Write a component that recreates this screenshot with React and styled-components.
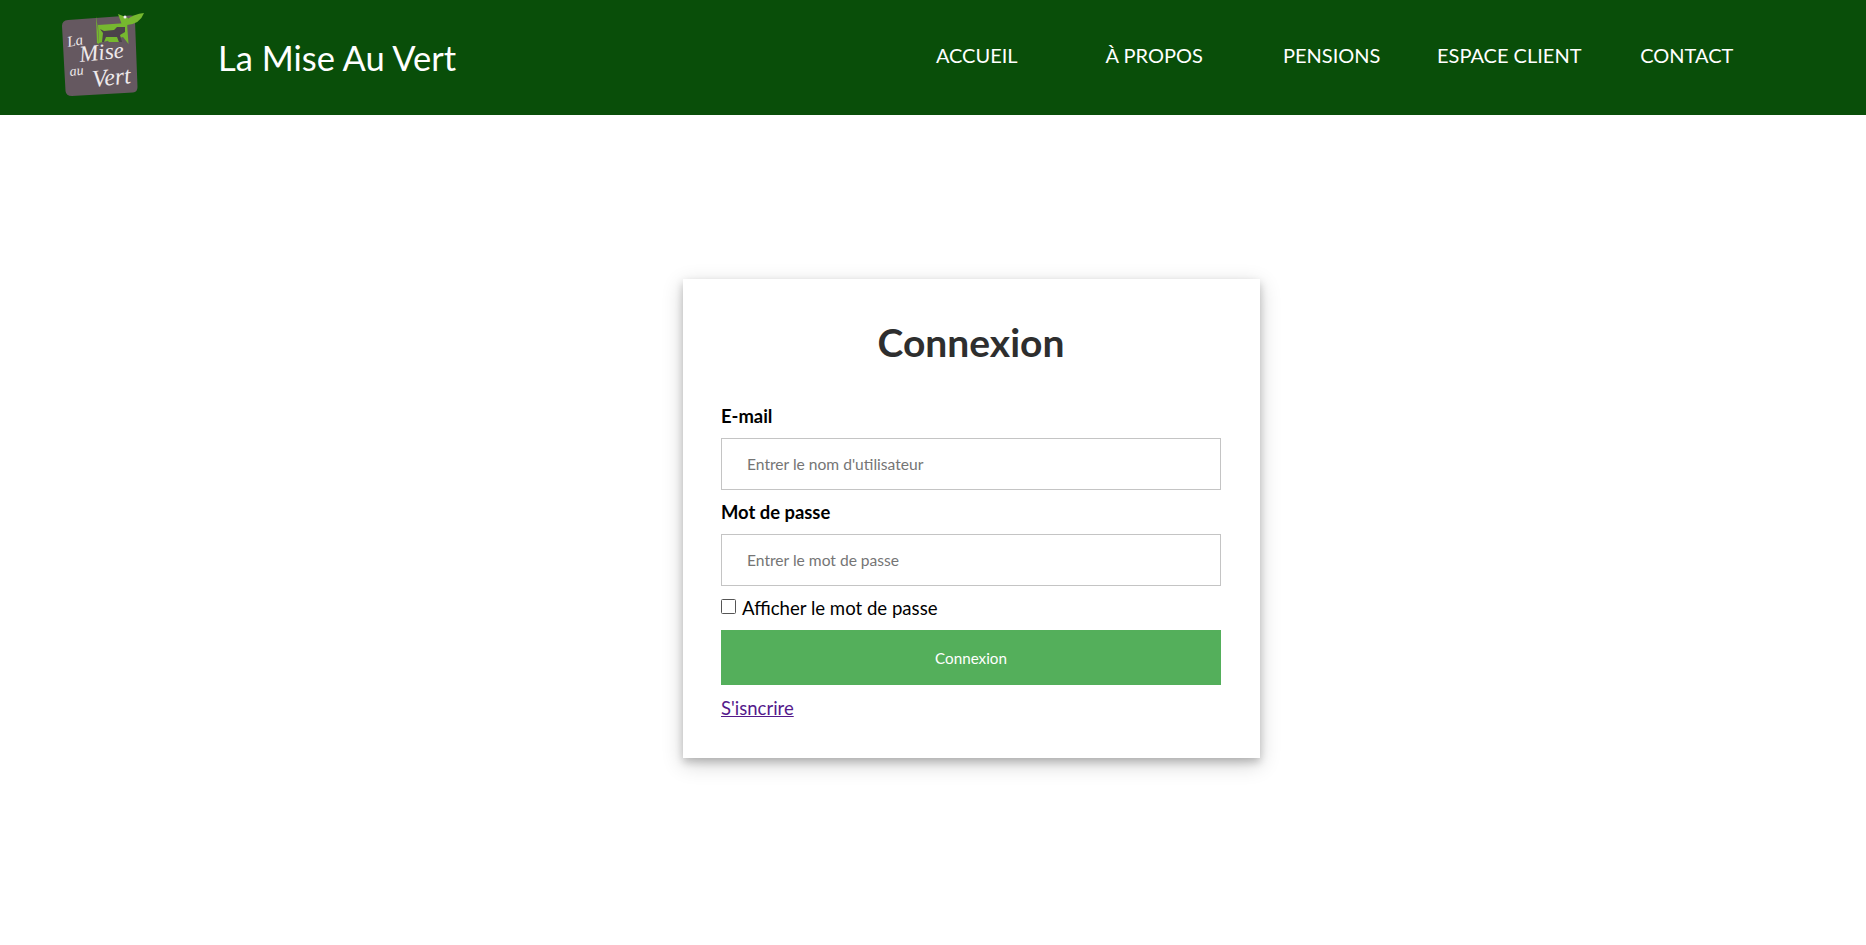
import styled, { createGlobalStyle } from "styled-components";

const GlobalStyle = createGlobalStyle`
  html, body {
    margin: 0;
    padding: 0;
    background: #fff;
    font-family: Lato, "Liberation Sans", sans-serif;
  }
`;

const Header = styled.header`
  display: flex;
  align-items: center;
  height: 115px;
  padding-left: 55px;
  background: #094e09;
  box-sizing: border-box;
`;

const LogoSvg = styled.svg`
  display: block;
  width: 100px;
  height: 100px;
  flex: none;
`;

const SiteTitle = styled.div`
  margin: 0 0 0 63px;
  width: 670px;
  flex: none;
  color: #fff;
  font-size: 34.5px;
  white-space: nowrap;
`;

const Nav = styled.nav`
  display: grid;
  grid-template-columns: repeat(5, 177.5px);
  margin-top: -5px;
`;

const NavLink = styled.a`
  color: #fff;
  font-size: 20px;
  text-align: center;
  white-space: nowrap;
  text-decoration: none;
`;

const Main = styled.main`
  padding: 164px 0 187px 683px;
`;

const Card = styled.form`
  width: 577px;
  padding: 38px 39px 37px 38px;
  box-sizing: border-box;
  background: #fff;
  box-shadow: 0 4px 8px rgba(0, 0, 0, 0.2), 0 6px 20px rgba(0, 0, 0, 0.19);
`;

const Title = styled.h1`
  margin: 0 0 38px;
  color: #2e2e2e;
  font-size: 39px;
  line-height: 50px;
  font-weight: 700;
  text-align: center;
`;

const Label = styled.label`
  display: block;
  height: 33px;
  color: #000;
  font-size: 18.4px;
  font-weight: 700;
  line-height: 22px;
`;

const Input = styled.input`
  display: block;
  width: 100%;
  height: 52px;
  margin-bottom: 11px;
  padding: 0 25px;
  box-sizing: border-box;
  border: 1px solid #c4c4c4;
  background: #fff;
  font-family: inherit;
  font-size: 15.6px;
  outline: none;

  &::placeholder {
    color: #757575;
    opacity: 1;
  }
`;

const ShowRow = styled.label`
  display: flex;
  align-items: flex-start;
  height: 35px;
  margin-top: -2px;
  color: #000;
  font-size: 18.6px;
  line-height: 26px;
`;

const Box = styled.span`
  width: 15px;
  height: 15px;
  margin: 4px 6px 0 0;
  box-sizing: border-box;
  border: 1.5px solid #555;
  border-radius: 1.5px;
  flex: none;
`;

const Submit = styled.button`
  display: block;
  width: 100%;
  height: 55px;
  border: 0;
  background: #54af5b;
  color: #fff;
  font-family: inherit;
  font-size: 15.2px;
`;

const SignUp = styled.a`
  display: inline-block;
  margin-top: 10px;
  color: #551a8b;
  font-size: 18.5px;
  line-height: 26px;
  text-decoration: underline;
`;

const Logo = () => (
  <LogoSvg viewBox="55 8 100 100">
    <path
      d="M68 20 L130 15.5 Q135 15 135 21 L137.5 87 Q137.5 92 133 92.5 L72 96 Q66 96 65.5 91 L62 26 Q62 20.5 68 20 Z"
      fill="#655860"
    />
    {/* stem, green field and leaves behind the dog */}
    <path d="M96 16 L97.5 26 L99 44 L97 43 Z" fill="#76b82f" />
    <path d="M98 25 L127 23 L128.5 44 L123 37 L99 43 Z" fill="#76b82f" />
    <path d="M118 14 L128 18 L127 27 L122 25 Z" fill="#76b82f" />
    <path d="M126 20 Q134 14 144 13 Q140 24 127 25 Z" fill="#76b82f" />
    <path d="M105 38 L118 37 L119 42 L109 42 Z" fill="#76b82f" />
    {/* dog */}
    <path
      d="M100 29 L104 31 L114 30 L117 27 L125 27 L125 32 L120 35 L122 42 L119 42 L117 37 L106 37 L104 42 L102 42 L103 33 Z"
      fill="#4b424a"
    />
    <circle cx="125" cy="17" r="1.5" fill="#f2f2f2" />
    <g fill="#efeaec" fontFamily="'Liberation Serif', serif" fontStyle="italic">
      <text x="68" y="47" fontSize="15" transform="rotate(-10 68 47)">La</text>
      <text x="80" y="62" fontSize="23" transform="rotate(-6 80 62)">Mise</text>
      <text x="70" y="76" fontSize="14" transform="rotate(-6 70 76)">au</text>
      <text x="93" y="87" fontSize="24" transform="rotate(-6 93 87)">Vert</text>
    </g>
  </LogoSvg>
);

const App = () => {
  return (
    <>
      <GlobalStyle />
      <Header>
        <Logo />
        <SiteTitle>La Mise Au Vert</SiteTitle>
        <Nav>
          <NavLink>ACCUEIL</NavLink>
          <NavLink>À PROPOS</NavLink>
          <NavLink>PENSIONS</NavLink>
          <NavLink>ESPACE CLIENT</NavLink>
          <NavLink>CONTACT</NavLink>
        </Nav>
      </Header>
      <Main>
        <Card>
          <Title>Connexion</Title>
          <Label>E-mail</Label>
          <Input placeholder="Entrer le nom d'utilisateur" />
          <Label>Mot de passe</Label>
          <Input placeholder="Entrer le mot de passe" />
          <ShowRow>
            <Box />
            Afficher le mot de passe
          </ShowRow>
          <Submit type="button">Connexion</Submit>
          <SignUp>S'isncrire</SignUp>
        </Card>
      </Main>
    </>
  );
};

export default App;
